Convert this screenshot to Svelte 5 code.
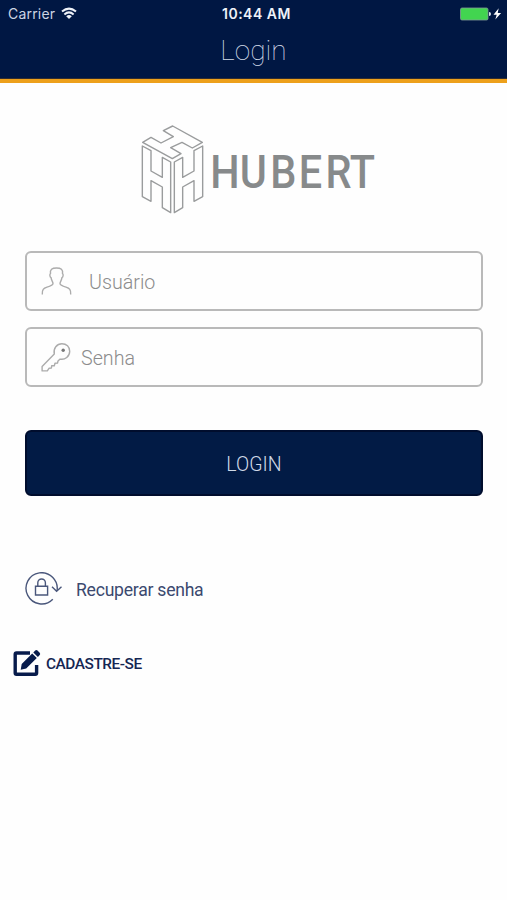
<script>
  let user = $state('');
  let password = $state('');
</script>

<main>
  <header>
    <div class="status">
      <span class="carrier">Carrier</span>
      <svg class="wifi" width="16" height="13" viewBox="0 0 16 13" fill="none" stroke="#eef2f8" stroke-width="2">
        <path d="M1 4.6Q8 -1.4 15 4.6M3.4 7.4Q8 3.4 12.6 7.4" />
        <path d="M5.2 9.2Q8 6.9 10.8 9.2L8 12Z" fill="#eef2f8" stroke="none" />
      </svg>
      <span class="time">10:44 AM</span>
      <svg class="battery" width="43" height="14" viewBox="0 0 43 14">
        <rect x="0.5" y="1" width="27.5" height="12" rx="1.5" fill="#42d550" stroke="#829d98" stroke-width="0.8" />
        <path d="M29 5q2 0 2 2t-2 2z" fill="#dce4ee" />
        <path d="M38.7 1.2L33.5 7.8h3.2l-1.4 4.8L41.1 5.9h-3.4z" fill="#fff" />
      </svg>
    </div>
    <h1>Login</h1>
  </header>

  <svg class="logo" width="240" height="92" viewBox="140 124 240 92">
    <g transform="translate(130 115) scale(.33333)" fill="none" stroke="#9a9c9d" stroke-width="4.2" stroke-linejoin="round">
      <path d="M38 82L63 67L93 84L130 65L100 47L128 33L217 82L187 99L156 82L122 98L153 116L127 131Z" />
      <path d="M37 93L63 107V168L97 187V127L122 141V293L97 278V216L63 197V259L37 245Z" />
      <path d="M218 93L192 107V168L158 187V127L133 141V293L158 278V216L192 197V259L218 245Z" />
    </g>
    <text transform="scale(.9 1)" x="233.5 266.4 300.2 332 361.7 388.7" y="187.6">HUBERT</text>
  </svg>

  <form onsubmit={(e) => e.preventDefault()}>
    <label class="field user">
      <svg width="32" height="30" viewBox="0 0 32 30" fill="none" stroke="#acacac" stroke-width="1.4" stroke-linejoin="round">
        <path d="M1.3 28.5C1 23.5 2.5 22.3 6 21.2C10 20 12 19.3 12 17.6C11.9 15.8 10.3 14.2 10.1 11.6C8.8 11.2 8.4 8.2 9.5 7.7C8.8 3.5 11 2 15.5 2S22.2 3.5 21.5 7.7C22.6 8.2 22.2 11.2 20.9 11.6C20.7 14.2 19.1 15.8 19 17.6C19 19.3 21 20 25 21.2C28.5 22.3 30 23.5 29.7 28.5" />
      </svg>
      <input type="text" placeholder="Usuário" bind:value={user} />
    </label>
    <label class="field pass">
      <svg width="32" height="30" viewBox="0 0 32 30" fill="none" stroke="#acacac" stroke-width="1.4" stroke-linejoin="round">
        <path d="M13.3 11.9C12 6.3 16 1.7 20.9 1.7C25.5 1.7 28.7 4.9 28.7 9.3C28.7 14.5 24 18.1 19.1 17.1L17 19L16.5 21.1L14 21.3L13.3 23.8L10.7 23.7L10.4 26L8 26.3L6.3 28.9H1.1V24.5Z" />
        <circle cx="22.2" cy="8.3" r="1.7" fill="#777" stroke="none" />
      </svg>
      <input type="password" placeholder="Senha" bind:value={password} />
    </label>
    <button type="submit">LOGIN</button>
  </form>

  <a class="recover" href="#recuperar">
    <svg width="38" height="34" viewBox="0 0 38 34" fill="none" stroke="#4a577b" stroke-width="1.4">
      <path d="M27.8 27.2A15.6 15.6 0 1 1 32 19" />
      <path d="M27 14.8L31.6 19.2L36.5 14.8" />
      <path d="M10.5 14.2H22.6V23H10.5ZM12.8 14V10.8a3.8 3.8 0 0 1 7.6 0V14" />
    </svg>
    <span>Recuperar senha</span>
  </a>

  <a class="signup" href="#cadastro">
    <svg width="28" height="28" viewBox="0 0 28 28">
      <path d="M17 4H3.5Q2.2 4 2.2 5.3V24Q2.2 25.3 3.5 25.3H22.3Q23.6 25.3 23.6 24V16" fill="none" stroke="#071b4b" stroke-width="3.4" />
      <path d="M7.7 20.8L8.7 15L19.2 4.5L23.8 9.1L13.2 19.5ZM20.3 3.4L22.2 1.5Q23.3 .5 24.5 1.5L26.7 3.7Q27.7 4.9 26.7 6L24.9 8Z" fill="#071b4b" />
    </svg>
    <span>CADASTRE-SE</span>
  </a>
</main>

<style>
  :global(body) { background: #fefefe; }
  main {
    width: 507px;
    height: 900px;
    overflow: hidden;
    display: flex;
    flex-direction: column;
    align-items: flex-start;
    background: #fefefe;
    font-family: Roboto, sans-serif;
  }
  header {
    box-sizing: border-box;
    width: 100%;
    height: 83px;
    background: #001743;
    border-bottom: 4px solid #eda01b;
    box-shadow: inset 0 -1px #302d32;
  }
  .status {
    height: 27px;
    display: grid;
    grid-template-columns: 53px 161px 1fr 43px;
    align-items: center;
    padding: 0 4px 0 8px;
    color: #eef2f8;
    font-family: Inter, sans-serif;
    font-size: 14px;
    line-height: 27px;
  }
  .carrier { font-size: 14px; letter-spacing: .2px; color: #ccd5e3; }
  .time { font-weight: 600; letter-spacing: .5px; }
  h1 {
    margin: 6px 0 0;
    text-align: center;
    font-size: 28px;
    line-height: 36px;
    font-weight: 100;
    color: #d4dcea;
  }
  .logo { margin: 41px 0 0 140px; }
  .logo text { font: 500 46px Roboto, sans-serif; fill: #878a8b; }
  form {
    width: 458px;
    margin: 35px 0 0 25px;
    display: flex;
    flex-direction: column;
  }
  .field {
    box-sizing: border-box;
    height: 60px;
    border: 2px solid #b9b9b9;
    border-radius: 6px;
    display: flex;
    align-items: center;
    padding-left: 14px;
    margin-bottom: 16px;
  }
  input {
    border: 0;
    outline: 0;
    padding: 2px 0 0;
    width: 300px;
    height: 40px;
    background: none;
    font: 300 19.7px Roboto, sans-serif;
    color: #555;
  }
  input::placeholder { color: #8c8c8c; opacity: 1; }
  .user input { margin-left: 16px; }
  .pass input { margin-left: 8px; }
  button {
    height: 66px;
    margin-top: 27px;
    border: 2px solid #000d2d;
    border-radius: 6px;
    background: #021b45;
    color: #d0d9e7;
    font: 300 19.5px Roboto, sans-serif;
    padding: 2px 0 0;
  }
  a { display: flex; align-items: center; text-decoration: none; }
  a span { padding-top: 2px; }
  .recover {
    margin: 76px 0 0 25px;
    color: #3b496f;
    font-size: 17.6px;
    letter-spacing: -.25px;
    gap: 13px;
  }
  .signup {
    margin: 43px 0 0 13px;
    color: #142653;
    font-size: 15.4px;
    letter-spacing: -.45px;
    font-weight: 500;
    gap: 5px;
  }
</style>
